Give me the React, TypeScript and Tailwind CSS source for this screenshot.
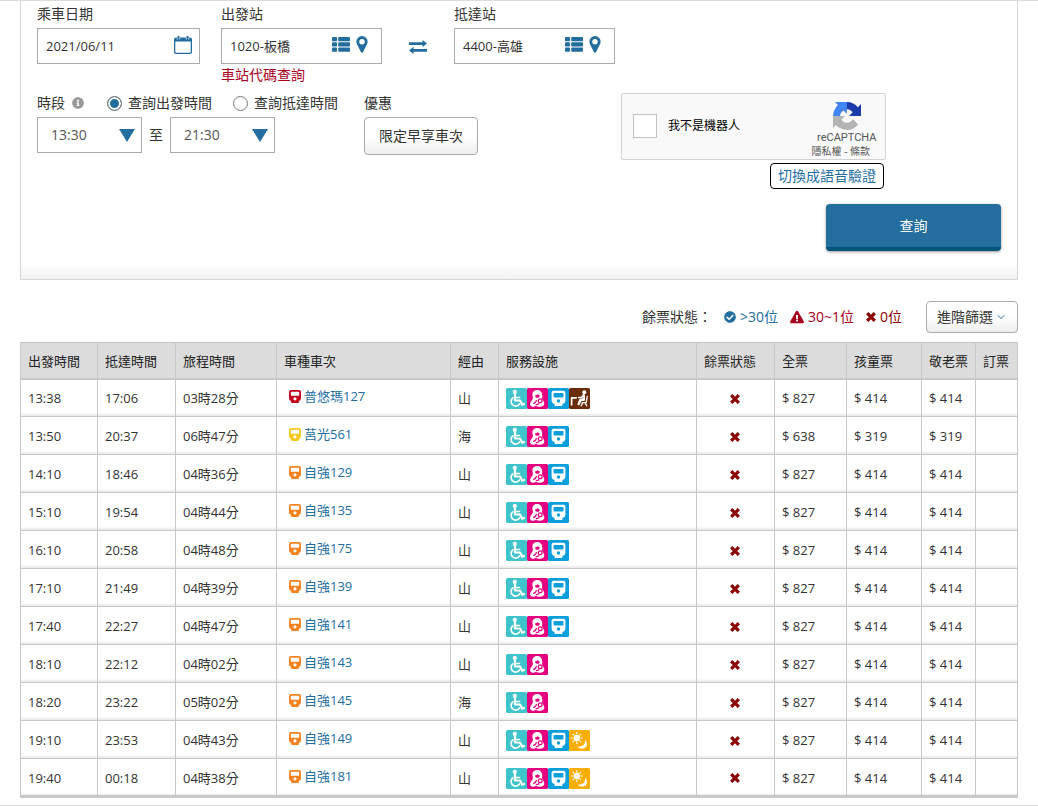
import { useState } from 'react'
import type { ReactNode } from 'react'
import { FaCheckCircle, FaExclamationTriangle, FaInfoCircle } from 'react-icons/fa'
import { ChevronDown } from 'lucide-react'

type Service = 'wheelchair' | 'nursing' | 'train' | 'desk' | 'daynight'

interface Train {
  depart: string
  arrive: string
  duration: string
  name: string
  color: string
  via: string
  services: Service[]
  full: number
  half: number
}

const RED = '#c4001d'
const YELLOW = '#fbc81e'
const ORANGE = '#f58220'

const basic: Service[] = ['wheelchair', 'nursing']
const standard: Service[] = ['wheelchair', 'nursing', 'train']

const trains: Train[] = [
  { depart: '13:38', arrive: '17:06', duration: '03時28分', name: '普悠瑪127', color: RED, via: '山', services: [...standard, 'desk'], full: 827, half: 414 },
  { depart: '13:50', arrive: '20:37', duration: '06時47分', name: '莒光561', color: YELLOW, via: '海', services: standard, full: 638, half: 319 },
  { depart: '14:10', arrive: '18:46', duration: '04時36分', name: '自強129', color: ORANGE, via: '山', services: standard, full: 827, half: 414 },
  { depart: '15:10', arrive: '19:54', duration: '04時44分', name: '自強135', color: ORANGE, via: '山', services: standard, full: 827, half: 414 },
  { depart: '16:10', arrive: '20:58', duration: '04時48分', name: '自強175', color: ORANGE, via: '山', services: standard, full: 827, half: 414 },
  { depart: '17:10', arrive: '21:49', duration: '04時39分', name: '自強139', color: ORANGE, via: '山', services: standard, full: 827, half: 414 },
  { depart: '17:40', arrive: '22:27', duration: '04時47分', name: '自強141', color: ORANGE, via: '山', services: standard, full: 827, half: 414 },
  { depart: '18:10', arrive: '22:12', duration: '04時02分', name: '自強143', color: ORANGE, via: '山', services: basic, full: 827, half: 414 },
  { depart: '18:20', arrive: '23:22', duration: '05時02分', name: '自強145', color: ORANGE, via: '海', services: basic, full: 827, half: 414 },
  { depart: '19:10', arrive: '23:53', duration: '04時43分', name: '自強149', color: ORANGE, via: '山', services: [...standard, 'daynight'], full: 827, half: 414 },
  { depart: '19:40', arrive: '00:18', duration: '04時38分', name: '自強181', color: ORANGE, via: '山', services: [...standard, 'daynight'], full: 827, half: 414 },
]

const columns = [
  { label: '出發時間', width: 'w-[77px]' },
  { label: '抵達時間', width: 'w-[78px]' },
  { label: '旅程時間', width: 'w-[101px]' },
  { label: '車種車次', width: 'w-[174px]' },
  { label: '經由', width: 'w-[48px]' },
  { label: '服務設施', width: 'w-[198px]' },
  { label: '餘票狀態', width: 'w-[78px]' },
  { label: '全票', width: 'w-[72px]' },
  { label: '孩童票', width: 'w-[75px]' },
  { label: '敬老票', width: 'w-[54px]' },
  { label: '訂票', width: 'w-[42px]' },
]

function CalendarIcon() {
  return (
    <svg viewBox="0 0 18 18" className="size-[18px]" fill="currentColor">
      <path
        fillRule="evenodd"
        d="M2 1.500h1.500V0h2v1.500h7V0h2v1.500H16a2 2 0 0 1 2 2V16a2 2 0 0 1-2 2H2a2 2 0 0 1-2-2V3.500a2 2 0 0 1 2-2zM1.300 5.500V15.700a1 1 0 0 0 1 1h13.400a1 1 0 0 0 1-1V5.500z"
      />
      <path d="M3.300 1.500v2M5.700 1.500v2M12.300 1.500v2M14.700 1.500v2" stroke="#fff" strokeWidth=".7" />
    </svg>
  )
}

function ListIcon() {
  return (
    <svg viewBox="0 0 18 15" className="h-[15px] w-[18px]" fill="currentColor">
      {[0, 5.3, 10.6].map((y) => (
        <g key={y}>
          <rect x="0" y={y} width="5" height="4.200" rx=".8" />
          <rect x="6.200" y={y} width="11.800" height="4.200" rx=".8" />
        </g>
      ))}
    </svg>
  )
}

function PinIcon() {
  return (
    <svg viewBox="0 0 12 17" className="h-[17px] w-3" fill="currentColor">
      <path
        fillRule="evenodd"
        d="M6 0a5.600 5.600 0 0 1 5.600 5.700c0 1-.2 1.700-.6 2.500L7.100 16a1.200 1.200 0 0 1-2.200 0L1 8.200A5.500 5.500 0 0 1 .4 5.700 5.600 5.600 0 0 1 6 0zm0 3a2.700 2.700 0 1 0 0 5.400A2.700 2.700 0 0 0 6 3z"
      />
    </svg>
  )
}

function SwapIcon() {
  return (
    <svg viewBox="0 0 18 14" className="h-[14px] w-[18px]" fill="currentColor">
      <path d="M0 2.200h13.500V0L18 3.600l-4.500 3.600V5H0zM18 9H4.500V6.800L0 10.400 4.500 14v-2.200H18z" />
    </svg>
  )
}

function CrossIcon() {
  return (
    <svg viewBox="0 0 10 10" className="size-[10px]" stroke="currentColor" strokeWidth="3.200">
      <path d="M1.200 1.200l7.600 7.600M8.800 1.200L1.200 8.800" />
    </svg>
  )
}

function TrainIcon({ color }: { color: string }) {
  return (
    <svg viewBox="0 0 12 13" className="h-[13px] w-3 shrink-0" fill={color}>
      <path
        fillRule="evenodd"
        d="M2 0h8a2 2 0 0 1 2 2v6a3 3 0 0 1-2 2.900L9.500 13h-7L2 10.900A3 3 0 0 1 0 8V2a2 2 0 0 1 2-2zm.3 1.800a.5.5 0 0 0-.5.500v2.800a.6.6 0 0 0 .6.600h7.200a.6.6 0 0 0 .6-.6V2.300a.5.5 0 0 0-.5-.5zM6 7.200a1.600 1.600 0 1 0 0 3.200 1.600 1.600 0 0 0 0-3.200z"
      />
    </svg>
  )
}

function ServiceTile({ fill, label, children }: { fill: string; label: string; children: ReactNode }) {
  return (
    <svg viewBox="0 0 21 21" className="size-[21px]" role="img" aria-label={label}>
      <rect width="21" height="21" rx="1.500" fill={fill} />
      {children}
    </svg>
  )
}

function ServiceIcon({ service }: { service: Service }) {
  switch (service) {
    case 'wheelchair':
      return (
        <ServiceTile fill="#40c4cc" label="身障旅客專用座位">
          <circle cx="8.800" cy="3.900" r="2.100" fill="#fff" />
          <g fill="none" stroke="#fff" strokeLinecap="round" strokeLinejoin="round">
            <path d="M9 6.500v6h5l2.300 4.200 1.700-.7" strokeWidth="2.200" />
            <path d="M9.500 9.500h4" strokeWidth="1.600" />
            <path d="M6.800 9.900a4.600 4.600 0 1 0 6.800 6" strokeWidth="1.700" />
          </g>
        </ServiceTile>
      )
    case 'nursing':
      return (
        <ServiceTile fill="#e5007f" label="哺集乳室">
          <path
            fill="#fff"
            d="M10.200 2C7 2 5.200 4.200 5.400 7c.1 1.800.9 2.700.3 4-.6 1.500-2.300 2.500-2.600 4.600-.3 2 1 3.300 3 3.200 1.100-.1 2-.5 2.800-1.100 1 .8 2.400 1.200 4 1.100 2.900-.1 4.600-1.600 4.400-3.600-.2-1.700-1.400-2.600-2-4.200-.5-1.300 0-2.400-.1-4C15.100 4.100 13.300 2 10.200 2z"
          />
          <path d="M8 7.400c1.200-.1 2.200-.7 2.700-1.500.4.800 1.100 1.300 2.100 1.500-.1 1.400-1.100 2.300-2.400 2.300S8.100 8.800 8 7.400z" fill="#e5007f" />
          <circle cx="13.200" cy="12.800" r="1.900" fill="#fff" stroke="#e5007f" strokeWidth="1.200" />
          <path d="M9.400 12.400c-.2 1.600-1.300 2.600-2.800 3M9.300 16.600c1.200 0 2.100-.4 2.700-1" stroke="#e5007f" strokeWidth="1.200" fill="none" strokeLinecap="round" />
        </ServiceTile>
      )
    case 'train':
      return (
        <ServiceTile fill="#0c9fdc" label="列車車廂">
          <path
            fill="#fff"
            fillRule="evenodd"
            d="M5.600 2.800h9.800a2 2 0 0 1 2 2v7.200c0 2.300-1 3.500-2.700 3.800l-.6 2.200H6.900l-.6-2.200c-1.700-.3-2.700-1.500-2.700-3.800V4.800a2 2 0 0 1 2-2zm.7 2.200c-.5 0-.8.3-.8.8v2.800c0 .5.300.9.8.9h8.400c.5 0 .8-.4.8-.9V5.800c0-.5-.3-.8-.8-.8zm4.200 6.300a1.700 1.700 0 1 0 0 3.400 1.700 1.700 0 0 0 0-3.400z"
          />
        </ServiceTile>
      )
    case 'desk':
      return (
        <ServiceTile fill="#6b2c0a" label="桌型座位">
          <circle cx="15.300" cy="4.300" r="2" fill="#fff" />
          <g fill="none" stroke="#fff" strokeLinejoin="round">
            <path d="M2.600 17.500V9.800h5.200" strokeWidth="1.700" />
            <path d="M14.700 7.200v4.600h-3.200L9.700 16" strokeWidth="2.500" strokeLinecap="round" />
            <path d="M14 7.700L12.200 9.500H9.500" strokeWidth="1.400" strokeLinecap="round" />
            <path d="M18.200 8.500l-1 6.200h-4M16 14.700l1.700 3.100M13.800 14.700l-1.600 3.100" strokeWidth="1.300" strokeLinecap="round" />
          </g>
        </ServiceTile>
      )
    default:
      return (
        <ServiceTile fill="#f9ae00" label="夜間列車">
          <circle cx="7.800" cy="8" r="3.200" fill="#fff" />
          <path
            d="M7.800 2v2.200M7.800 11.800V14M1.800 8H4M11.600 8h2.200M3.600 3.800l1.500 1.500M10.500 10.700l1.500 1.500M3.600 12.200l1.500-1.500M10.500 5.300L12 3.800"
            stroke="#fff"
            strokeWidth="1.200"
          />
          <path d="M16.200 9.800c3.400 3.600 1.600 8.700-2.700 8.900-2 .1-3.700-.7-4.700-2.200 4.400.8 7.800-2.200 7.400-6.700z" fill="#fff" />
        </ServiceTile>
      )
  }
}

function RecaptchaLogo() {
  return (
    <svg viewBox="0 0 64 64" className="size-7">
      <path fill="#1c3aa9" d="M64 31.955l-.033-1.370V4.687l-7.160 7.160C50.948 4.674 42.033.093 32.050.093c-10.400 0-19.622 4.960-25.458 12.640l11.736 11.860a15.550 15.550 0 0 1 4.754-5.334c2.050-1.600 4.952-2.906 8.968-2.906.485 0 .86.057 1.135.163 4.976.393 9.288 3.140 11.828 7.124l-8.307 8.307L64 31.953" />
      <path fill="#4285f4" d="M31.862.094l-1.370.033H4.594l7.160 7.160C4.580 13.147 0 22.060 0 32.046c0 10.400 4.960 19.622 12.640 25.458L24.500 45.768a15.550 15.550 0 0 1-5.334-4.754c-1.600-2.050-2.906-4.952-2.906-8.968 0-.485.057-.86.163-1.135.393-4.976 3.140-9.288 7.124-11.828l8.307 8.307L31.860.095" />
      <path fill="#b4b4b4" d="M.001 32.045l.033 1.370v25.898l7.160-7.160c5.860 7.173 14.774 11.754 24.760 11.754 10.400 0 19.622-4.960 25.458-12.640l-11.736-11.860a15.550 15.550 0 0 1-4.754 5.334c-2.050 1.600-4.952 2.906-8.968 2.906-.485 0-.86-.057-1.135-.163-4.976-.393-9.288-3.140-11.828-7.124l8.307-8.307c-10.522.04-22.400.066-27.295-.005" />
    </svg>
  )
}

function StationField({ id, label, value, children }: { id: string; label: string; value: string; children?: ReactNode }) {
  return (
    <div className="w-[161px]">
      <label htmlFor={id} className="block leading-5">{label}</label>
      <div className="mt-1 flex h-9 items-center border border-[#aaa] pr-[13px] pl-2">
        <input id={id} defaultValue={value} className="w-0 flex-1 text-[13px] outline-none" />
        <div className="flex items-center gap-[6px] pb-1 text-[#236e9f]">
          <button type="button" aria-label={`${label}清單`}><ListIcon /></button>
          <button type="button" aria-label={`${label}地圖`}><PinIcon /></button>
        </div>
      </div>
      {children}
    </div>
  )
}

function TimeSelect({ label, value }: { label: string; value: string }) {
  return (
    <div className="relative w-[105px]">
      <select
        aria-label={label}
        defaultValue={value}
        className="h-9 w-full appearance-none border border-[#aaa] bg-white px-[13px] text-[#555] outline-none"
      >
        <option>{value}</option>
      </select>
      <svg viewBox="0 0 16 13" className="pointer-events-none absolute top-3 right-[7px] h-[13px] w-4">
        <path d="M0 0h16L8 13z" fill="#236e9f" />
      </svg>
    </div>
  )
}

const radioClass =
  'size-[15px] appearance-none rounded-full border border-[#777] bg-white checked:bg-[#236e9f] checked:shadow-[inset_0_0_0_2px_white]'

export default function App() {
  const [mode, setMode] = useState('depart')

  return (
    <div className="border-y border-[#dcdcdc] bg-white pb-[7px] font-['Open_Sans','Noto_Sans_CJK_TC',sans-serif] text-sm text-[#333]">
      <div className="px-5">
        {/* Search form */}
        <form
          onSubmit={(e) => e.preventDefault()}
          className="border-x border-b border-[#d6d6d6] bg-[linear-gradient(to_top,#f1f1f1,#fff_16px)] px-4 pt-[3px] pb-7"
        >
          <div className="flex items-start">
            <div className="mr-[21px] w-[163px]">
              <label htmlFor="date" className="block leading-5">乘車日期</label>
              <div className="mt-1 flex h-9 items-center border border-[#aaa] pr-[7px] pl-2">
                <input id="date" defaultValue="2021/06/11" className="w-0 flex-1 text-[13px] outline-none" />
                <button type="button" aria-label="選擇日期" className="pb-[2px] text-[#236e9f]"><CalendarIcon /></button>
              </div>
            </div>
            <StationField id="from" label="出發站" value="1020-板橋">
              <a href="#codes" className="mt-px block leading-5 text-[#a8001c]">車站代碼查詢</a>
            </StationField>
            <button type="button" aria-label="交換起訖站" className="mx-[27px] mt-9 text-[#236e9f]"><SwapIcon /></button>
            <StationField id="to" label="抵達站" value="4400-高雄" />
          </div>

          <div className="mt-2 flex items-start">
            <div className="w-[327px]">
              <div className="flex items-center leading-5 whitespace-nowrap">
                <span>時段</span>
                <FaInfoCircle className="ml-[7px] size-3 text-[#999]" />
                <label className="ml-[23px] flex items-center gap-[6px]">
                  <input type="radio" name="mode" checked={mode === 'depart'} onChange={() => setMode('depart')} className={radioClass} />
                  查詢出發時間
                </label>
                <label className="ml-[21px] flex items-center gap-[6px]">
                  <input type="radio" name="mode" checked={mode === 'arrive'} onChange={() => setMode('arrive')} className={radioClass} />
                  查詢抵達時間
                </label>
              </div>
              <div className="mt-1 flex items-center">
                <TimeSelect label="開始時間" value="13:30" />
                <span className="mx-[7px]">至</span>
                <TimeSelect label="結束時間" value="21:30" />
              </div>
            </div>
            <div>
              <div className="leading-5">優惠</div>
              <button type="button" className="mt-1 h-[38px] rounded border border-[#aaa] bg-linear-to-b from-white from-50% to-[#eee] px-[14px]">
                限定早享車次
              </button>
            </div>

            {/* Captcha */}
            <div className="mr-[115px] ml-auto flex flex-col items-end">
              <div className="flex h-[67px] w-[265px] justify-between rounded-xs border border-[#d3d3d3] bg-[#f9f9f9] pr-[3px] pl-[11px]">
                <label className="flex items-center gap-[11px] pb-[2px] text-xs text-black">
                  <input type="checkbox" className="size-6 appearance-none border border-[#c1c1c1] bg-white" />
                  我不是機器人
                </label>
                <div className="flex flex-col items-center pt-2 text-[11px] leading-[15px] text-[#555]">
                  <RecaptchaLogo />
                  <div className="font-[Roboto,sans-serif]">reCAPTCHA</div>
                  <div className="mr-3 text-[10px] leading-3">
                    <a href="#privacy">隱私權</a> - <a href="#terms">條款</a>
                  </div>
                </div>
              </div>
              <button type="button" className="mt-[3px] mr-[2px] h-[26px] rounded border border-black bg-white px-[7px] text-[#236e9f]">
                切換成語音驗證
              </button>
            </div>
          </div>

          <div className="mt-[15px] flex justify-end">
            <button type="submit" className="h-[47px] w-[175px] rounded border-b-4 border-[#00567a] bg-[#236e9f] text-white shadow-[0_1px_3px_rgba(0,0,0,0.4)]">
              查詢
            </button>
          </div>
        </form>

        {/* Legend */}
        <div className="mt-[21px] mb-[9px] flex items-center justify-end">
          <span>餘票狀態：</span>
          <span className="ml-3 flex items-center gap-1 text-[#236e9f]"><FaCheckCircle className="size-3" />&gt;30位</span>
          <span className="ml-3 flex items-center gap-1 text-[#a8001c]"><FaExclamationTriangle className="size-[14px]" />30~1位</span>
          <span className="ml-3 flex items-center gap-1 text-[#8b0000]"><CrossIcon />0位</span>
          <button type="button" className="ml-6 flex h-8 items-center gap-[2px] rounded border border-[#aaa] bg-linear-to-b from-white from-50% to-[#eee] px-[10px]">
            進階篩選
            <ChevronDown className="size-3 text-[#236e9f]" />
          </button>
        </div>

        {/* Results */}
        <table className="w-full table-fixed border-collapse border border-b-3 border-[#c8c8c8] text-[13px]">
          <thead>
            <tr className="h-9 bg-[#dcdcdc]">
              {columns.map((c) => (
                <th key={c.label} className={`${c.width} border border-b-2 border-[#c8c8c8] pt-[2px] pl-[7px] text-left font-normal whitespace-nowrap text-[#222]`}>
                  {c.label}
                </th>
              ))}
            </tr>
          </thead>
          <tbody>
            {trains.map((t) => (
              <tr key={t.name} className="h-[38px] bg-[linear-gradient(to_top,#ececec_2px,#fff_4px)] *:border *:border-[#c8c8c8] *:pt-[2px] *:pl-[7px]">
                <td>{t.depart}</td>
                <td>{t.arrive}</td>
                <td>{t.duration}</td>
                <td>
                  <a href="#train" className="ml-[5px] flex items-center gap-[3px] pb-1 text-[#236e9f]">
                    <TrainIcon color={t.color} />
                    {t.name}
                  </a>
                </td>
                <td>{t.via}</td>
                <td>
                  <div className="flex">
                    {t.services.map((s) => <ServiceIcon key={s} service={s} />)}
                  </div>
                </td>
                <td>
                  <div className="flex justify-center pr-2 text-[#8b0000]"><CrossIcon /></div>
                </td>
                <td>$ {t.full}</td>
                <td>$ {t.half}</td>
                <td>$ {t.half}</td>
                <td></td>
              </tr>
            ))}
          </tbody>
        </table>
      </div>
    </div>
  )
}
